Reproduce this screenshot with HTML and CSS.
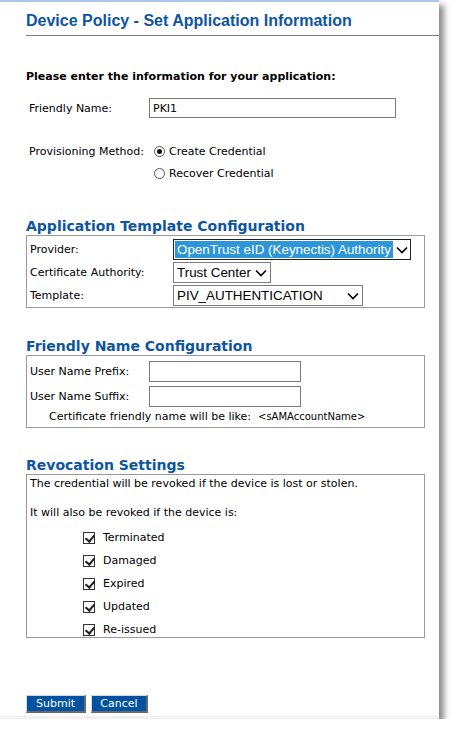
FILE: index.html
```html
<!DOCTYPE html>
<html>
<head>
<meta charset="utf-8">
<link rel="stylesheet" href="styles.css">
</head>
<body>
<div class="panel">
  <h1 class="title">Device Policy - Set Application Information</h1>
  <p class="intro">Please enter the information for your application:</p>

  <div class="row fn-row">
    <span class="lbl lbl-fn">Friendly Name:</span>
    <input class="txt txt-fn" type="text" value="PKI1">
  </div>

  <div class="row prov-row">
    <span class="lbl lbl-prov">Provisioning Method:</span>
    <div class="radios">
      <label class="radio"><span class="rb checked"></span>Create Credential</label>
      <label class="radio"><span class="rb"></span>Recover Credential</label>
    </div>
  </div>

  <h2 class="sect sect-app">Application Template Configuration</h2>
  <div class="box box-app">
    <div class="brow">
      <span class="blbl">Provider:</span>
      <div class="sel sel-focus sel-provider"><span class="val hl">OpenTrust eID (Keynectis) Authority</span><svg class="chev" width="12" height="8" viewBox="0 0 12 8"><path d="M1 1.5 L6 6.5 L11 1.5" fill="none" stroke="#000" stroke-width="1.6"/></svg></div>
    </div>
    <div class="brow">
      <span class="blbl">Certificate Authority:</span>
      <div class="sel sel-ca"><span class="val">Trust Center</span><svg class="chev" width="12" height="8" viewBox="0 0 12 8"><path d="M1 1.5 L6 6.5 L11 1.5" fill="none" stroke="#000" stroke-width="1.6"/></svg></div>
    </div>
    <div class="brow">
      <span class="blbl">Template:</span>
      <div class="sel sel-tpl"><span class="val">PIV_AUTHENTICATION</span><svg class="chev" width="12" height="8" viewBox="0 0 12 8"><path d="M1 1.5 L6 6.5 L11 1.5" fill="none" stroke="#000" stroke-width="1.6"/></svg></div>
    </div>
  </div>

  <h2 class="sect sect-fn">Friendly Name Configuration</h2>
  <div class="box box-fn">
    <div class="frow">
      <span class="flbl">User Name Prefix:</span>
      <input class="txt txt-small" type="text">
    </div>
    <div class="frow">
      <span class="flbl">User Name Suffix:</span>
      <input class="txt txt-small" type="text">
    </div>
    <div class="hint">Certificate friendly name will be like:&nbsp;&nbsp;<span class="hint-val">&lt;sAMAccountName&gt;</span></div>
  </div>

  <h2 class="sect sect-rev">Revocation Settings</h2>
  <div class="box box-rev">
    <p class="rev-p1">The credential will be revoked if the device is lost or stolen.</p>
    <p class="rev-p2">It will also be revoked if the device is:</p>
    <ul class="checks">
      <li><span class="cb"></span>Terminated</li>
      <li><span class="cb"></span>Damaged</li>
      <li><span class="cb"></span>Expired</li>
      <li><span class="cb"></span>Updated</li>
      <li><span class="cb"></span>Re-issued</li>
    </ul>
  </div>

  <div class="buttons">
    <button class="btn btn-submit">Submit</button>
    <button class="btn btn-cancel">Cancel</button>
  </div>
</div>
</body>
</html>
```

FILE: styles.css
```css
html, body {
  margin: 0;
  padding: 0;
  background: #ffffff;
}
body {
  font-family: "DejaVu Sans", Verdana, sans-serif;
  font-size: 11px;
  color: #000;
}
.panel {
  box-sizing: border-box;
  width: 439px;
  height: 719px;
  border-top: 2px solid #aac6ea;
  border-bottom: 3px solid #f1f1f1;
  padding: 0 0 0 26px;
  box-shadow: 5px 5px 6px rgba(0, 0, 0, 0.45);
  display: flex;
  flex-direction: column;
}
.title {
  margin: 0;
  padding: 10px 0 6px 0;
  font-family: "Liberation Sans", Arial, sans-serif;
  font-weight: bold;
  font-size: 16px;
  line-height: 17px;
  color: #0d55a0;
  border-bottom: 1px solid #7a7a7a;
}
.intro {
  margin: 34px 0 0 0;
  font-weight: bold;
  font-size: 11px;
  line-height: 13px;
}
.row {
  display: flex;
  align-items: center;
  padding-left: 3px;
}
.fn-row {
  margin-top: 15px;
}
.lbl-fn {
  width: 120px;
}
.txt {
  box-sizing: border-box;
  border: 1px solid #7a7a7a;
  height: 20px;
  margin: 0;
  padding: 0 3px;
  font-family: "DejaVu Sans", Verdana, sans-serif;
  font-size: 11px;
  background: #fff;
  outline: none;
}
.txt-fn {
  width: 247px;
}
.prov-row {
  margin-top: 27px;
  align-items: flex-start;
}
.lbl-prov {
  width: 125px;
  padding-top: 0px;
}
.radios {
  display: flex;
  flex-direction: column;
  gap: 9px;
}
.radio {
  display: flex;
  align-items: center;
  gap: 4px;
  line-height: 13px;
}
.rb {
  box-sizing: border-box;
  width: 11px;
  height: 11px;
  border-radius: 50%;
  border: 1px solid #555;
  background: #fff;
  position: relative;
}
.rb.checked::after {
  content: "";
  position: absolute;
  left: 2px;
  top: 2px;
  width: 5px;
  height: 5px;
  border-radius: 50%;
  background: #111;
}
.sect {
  margin: 0;
  font-weight: bold;
  font-size: 14px;
  line-height: 17px;
  color: #0d55a0;
}
.sect-app {
  margin-top: 38px;
}
.box {
  box-sizing: border-box;
  width: 399px;
  border: 1px solid #9a9a9a;
}
.box-app {
  padding: 2px 0 0 3px;
  height: 73px;
}
.brow {
  display: flex;
  align-items: center;
  height: 23px;
}
.blbl {
  width: 143px;
}
.sel {
  box-sizing: border-box;
  height: 21px;
  border: 1px solid #7a7a7a;
  display: flex;
  align-items: center;
  padding: 0 3px 0 1px;
  font-family: "Liberation Sans", Arial, sans-serif;
  font-size: 13.4px;
  white-space: nowrap;
  position: relative;
}
.sel .val {
  flex: 1;
  padding: 0 2px;
  line-height: 17px;
}
.sel-focus {
  border-color: #222;
}
.sel .hl {
  flex: 0 0 auto;
  background: #2d96d8;
  color: #fff;
  margin-right: 3px;
}
.sel-provider {
  width: 238px;
}
.sel-ca {
  width: 98px;
}
.sel-tpl {
  width: 190px;
}
.chev {
  flex: 0 0 auto;
}
.sect-fn {
  margin-top: 30px;
}
.box-fn {
  height: 73px;
  padding: 3px 0 0 3px;
}
.frow {
  display: flex;
  align-items: center;
  height: 25px;
}
.flbl {
  width: 119px;
}
.txt-small {
  width: 152px;
  height: 21px;
}
.hint {
  padding-left: 19px;
  margin-top: 1px;
}
.hint-val {
  font-size: 10px;
}
.sect-rev {
  margin-top: 29px;
}
.box-rev {
  height: 164px;
  padding: 2px 0 0 3px;
}
.box-rev p {
  margin: 0;
  line-height: 14px;
}
.rev-p2 {
  margin-top: 15px !important;
}
.checks {
  list-style: none;
  margin: 6px 0 0 0;
  padding: 0 0 0 53px;
}
.checks li {
  display: flex;
  align-items: center;
  height: 23px;
  gap: 8px;
}
.cb {
  box-sizing: border-box;
  width: 12px;
  height: 12px;
  border: 1px solid #333;
  background: #fff;
  position: relative;
}
.cb::after {
  content: "";
  position: absolute;
  left: 3px;
  top: 0px;
  width: 4px;
  height: 7px;
  border-right: 2px solid #222;
  border-bottom: 2px solid #222;
  transform: rotate(40deg);
}
.buttons {
  margin-top: auto;
  margin-bottom: 3px;
  display: flex;
  gap: 5px;
}
.btn {
  box-sizing: border-box;
  height: 18px;
  padding: 0;
  margin: 0;
  background: #0152a0;
  color: #fff;
  font-family: "DejaVu Sans", Verdana, sans-serif;
  font-size: 11px;
  line-height: 14px;
  border-style: solid;
  border-width: 1px 2px 2px 1px;
  border-color: #d8d8d8 #6a6a6a #6a6a6a #d8d8d8;
}
.btn-submit {
  width: 60px;
}
.btn-cancel {
  width: 57px;
}
```
